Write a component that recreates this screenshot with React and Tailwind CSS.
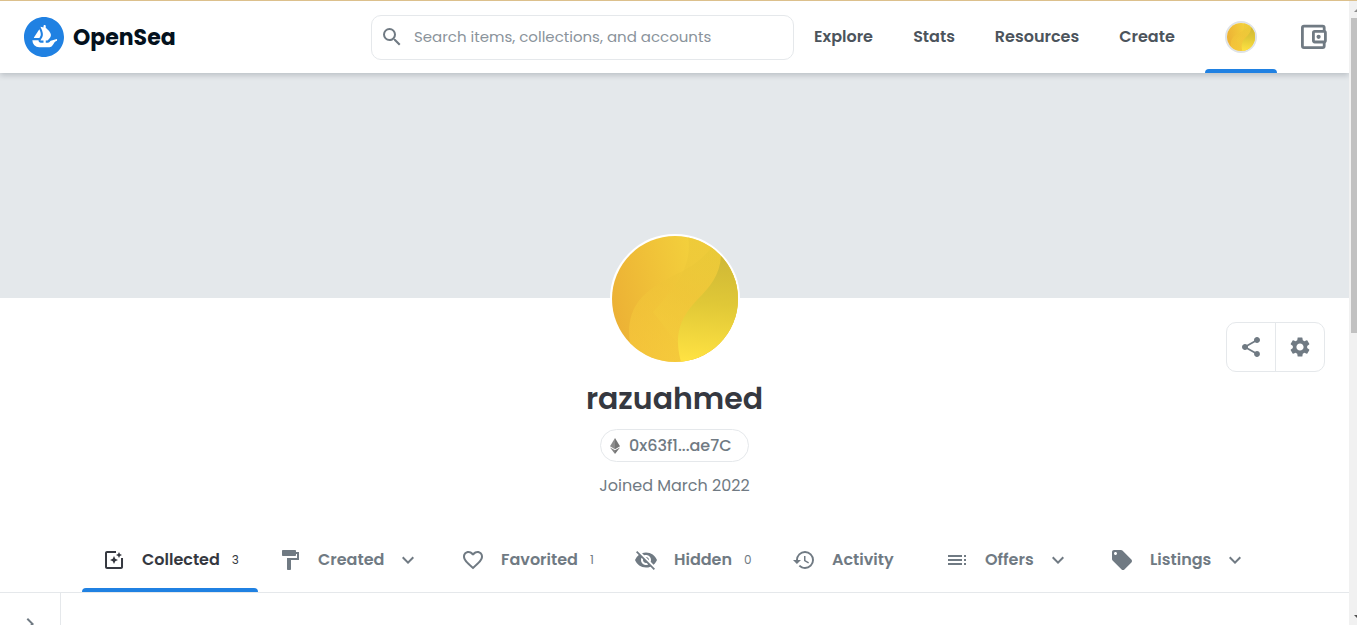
import {
  MdSearch,
  MdShare,
  MdSettings,
  MdPhotoFilter,
  MdFormatPaint,
  MdFavoriteBorder,
  MdVisibilityOff,
  MdHistory,
  MdToc,
  MdLocalOffer,
  MdExpandMore,
  MdChevronRight,
} from "react-icons/md";
import { SiOpensea } from "react-icons/si";

const navLinks = [
  { label: "Explore", width: "w-[99px]" },
  { label: "Stats", width: "w-[82px]" },
  { label: "Resources", width: "w-[124px]" },
  { label: "Create", width: "w-[96px]" },
];

const tabs = [
  { label: "Collected", icon: MdPhotoFilter, count: 3, width: "w-[176px]", active: true },
  { label: "Created", icon: MdFormatPaint, menu: true, width: "w-[183px]" },
  { label: "Favorited", icon: MdFavoriteBorder, count: 1, width: "w-[173px]" },
  { label: "Hidden", icon: MdVisibilityOff, count: 0, width: "w-[158px]" },
  { label: "Activity", icon: MdHistory, width: "w-[153px]" },
  { label: "Offers", icon: MdToc, menu: true, width: "w-[165px]" },
  { label: "Listings", icon: MdLocalOffer, menu: true, width: "w-[177px]" },
];

function AvatarArt({ id }) {
  return (
    <svg viewBox="0 0 126 126" className="block h-full w-full rounded-full" aria-hidden="true">
      <defs>
        <linearGradient id={`${id}-base`} x1="0" y1="0.55" x2="0.7" y2="0.4">
          <stop offset="0" stopColor="#ecb135" />
          <stop offset="0.5" stopColor="#f0c138" />
          <stop offset="1" stopColor="#f3d03c" />
        </linearGradient>
        <linearGradient id={`${id}-mid`} x1="0.1" y1="1" x2="0.8" y2="0">
          <stop offset="0" stopColor="#f2c73a" />
          <stop offset="1" stopColor="#ecca39" />
        </linearGradient>
        <linearGradient id={`${id}-low`} x1="0.8" y1="0" x2="0.4" y2="1">
          <stop offset="0" stopColor="#e3c936" />
          <stop offset="0.5" stopColor="#efc438" />
          <stop offset="1" stopColor="#fad03e" />
        </linearGradient>
        <linearGradient id={`${id}-leaf`} x1="0.55" y1="0" x2="0.5" y2="1">
          <stop offset="0" stopColor="#cfb836" />
          <stop offset="0.45" stopColor="#e0c837" />
          <stop offset="1" stopColor="#ffe242" />
        </linearGradient>
      </defs>
      <rect width="126" height="126" fill={`url(#${id}-base)`} />
      <path d="M76 0C81 29 65 50 41 76L80 126H126V0Z" fill={`url(#${id}-mid)`} opacity="0.8" />
      <path
        d="M99 12C84 31 69 35 55 43C30 57 13 72 18 108L40 126H100L126 50V0Z"
        fill={`url(#${id}-low)`}
        opacity="0.5"
      />
      <path d="M109 20C108 39 98 51 85 64C65 85 63 102 69 126H126V20Z" fill={`url(#${id}-leaf)`} />
    </svg>
  );
}

function EthIcon() {
  return (
    <svg viewBox="0 0 12 18" className="h-[18px] w-3 shrink-0" aria-hidden="true">
      <path d="M6 1L1 9.3L6 12.2Z" fill="#8c8c8c" />
      <path d="M6 1L11 9.3L6 12.2Z" fill="#757575" />
      <path d="M1 10.4L6 17V13.3Z" fill="#858585" />
      <path d="M11 10.4L6 17V13.3Z" fill="#757575" />
    </svg>
  );
}

function WalletIcon() {
  return (
    <svg viewBox="0 0 32 32" className="h-8 w-8" fill="none" stroke="currentColor" strokeWidth="2.8" aria-hidden="true">
      <rect x="5.4" y="5.1" width="21.8" height="21.6" rx="1.6" />
      <rect x="16.4" y="10.4" width="12" height="10.6" rx="1.4" fill="white" />
      <circle cx="21.6" cy="15.8" r="2.1" fill="currentColor" stroke="none" />
    </svg>
  );
}

function Header() {
  return (
    <header className="z-10 flex h-[72px] shrink-0 items-stretch bg-white pr-4 shadow-[0_2px_6px_rgba(4,17,29,0.2)]">
      <a href="#home" className="flex w-[371px] shrink-0 items-center gap-[9px] pl-6 text-[#04111d]">
        <SiOpensea className="h-10 w-10 text-[#2081e2]" aria-hidden="true" />
        <span className="pt-[2px] text-[22px] leading-8 font-bold">OpenSea</span>
      </a>
      <div className="flex min-w-0 flex-1 items-center">
        <div className="flex h-[45px] w-full items-center gap-[10px] rounded-[10px] border border-[#e5e8eb] px-2">
          <MdSearch className="h-6 w-6 shrink-0 text-[#707a83]" aria-hidden="true" />
          <input
            type="search"
            aria-label="Search items, collections, and accounts"
            placeholder="Search items, collections, and accounts"
            className="min-w-0 flex-1 bg-transparent text-[15px] leading-6 text-[#353840] outline-none placeholder:text-[#8a939b]"
          />
        </div>
      </div>
      <nav className="flex shrink-0 items-center" aria-label="Main">
        {navLinks.map((link) => (
          <a
            key={link.label}
            href={`#${link.label.toLowerCase()}`}
            className={`${link.width} flex h-full items-center justify-center text-base font-semibold text-[#4c545c]`}
          >
            {link.label}
          </a>
        ))}
      </nav>
      <button
        type="button"
        aria-label="Account"
        className="ml-[10px] flex w-[72px] shrink-0 flex-col items-center justify-between"
      >
        <span className="mt-5 block h-8 w-8 rounded-full border-2 border-[#dfe3e6]">
          <AvatarArt id="small" />
        </span>
        <span className="h-1 w-full rounded-t-[4px] bg-[#2081e2]" />
      </button>
      <button type="button" aria-label="Wallet" className="ml-4 flex w-10 shrink-0 items-center justify-center text-[#707a83]">
        <WalletIcon />
      </button>
    </header>
  );
}

function Tab({ tab }) {
  const Icon = tab.icon;
  return (
    <button
      type="button"
      role="tab"
      aria-selected={Boolean(tab.active)}
      className={`${tab.width} flex h-full flex-col ${tab.active ? "text-[#353840]" : "text-[#707a83]"}`}
    >
      <span className="flex w-full flex-1 items-center pt-2 pl-5">
        <Icon className="h-6 w-6 shrink-0" aria-hidden="true" />
        <span className="ml-4 text-base leading-6 font-semibold">{tab.label}</span>
        {tab.count !== undefined && <span className="ml-3 text-xs leading-6">{tab.count}</span>}
        {tab.menu && <MdExpandMore className="ml-3 h-6 w-6 shrink-0" aria-hidden="true" />}
      </span>
      <span className={`h-1 w-full rounded-t-[4px] ${tab.active ? "bg-[#2081e2]" : "bg-transparent"}`} />
    </button>
  );
}

function Profile() {
  return (
    <section className="flex shrink-0 flex-col">
      <div className="h-[225px] bg-[#e4e8eb]" />
      <div className="grid grid-cols-[1fr_auto_1fr] items-start px-6">
        <div />
        <div className="-mt-16 flex flex-col items-center">
          <div className="h-[130px] w-[130px] rounded-full border-2 border-white bg-white">
            <AvatarArt id="large" />
          </div>
          <h1 className="mt-[15px] text-[30px] leading-10 font-semibold text-[#353840]">razuahmed</h1>
          <button
            type="button"
            className="mt-[10px] flex h-[33px] w-[149px] items-center gap-2 rounded-full border border-[#e5e8eb] pl-2 text-base font-medium text-[#707a83]"
          >
            <EthIcon />
            0x63f1...ae7C
          </button>
          <p className="mt-3 text-base leading-6 text-[#707a83]">Joined March 2022</p>
        </div>
        <div className="mt-6 flex h-[50px] divide-x divide-[#e5e8eb] justify-self-end rounded-[10px] border border-[#e5e8eb] text-[#707a83]">
          <button type="button" aria-label="Share" className="flex w-[49px] items-center justify-center">
            <MdShare className="h-6 w-6" />
          </button>
          <button type="button" aria-label="Settings" className="flex w-12 items-center justify-center">
            <MdSettings className="h-6 w-6" />
          </button>
        </div>
      </div>
      <div
        role="tablist"
        aria-label="Profile sections"
        className="mt-[25px] flex h-[70px] justify-center border-b border-[#e5e8eb]"
      >
        {tabs.map((tab) => (
          <Tab key={tab.label} tab={tab} />
        ))}
      </div>
    </section>
  );
}

function Scrollbar() {
  return (
    <div className="flex w-2 shrink-0 flex-col overflow-hidden bg-[#f1f1f1] pl-[2px]" aria-hidden="true">
      <svg viewBox="0 0 6 17" className="h-[17px] w-[6px] shrink-0">
        <path d="M3 11L7 7V11Z" fill="#8b8b8b" />
      </svg>
      <div className="h-[315px] shrink-0 bg-[#c1c1c1]" />
      <svg viewBox="0 0 6 17" className="mt-auto h-[17px] w-[6px] shrink-0">
        <path d="M3 7H7V11Z" fill="#505050" />
      </svg>
    </div>
  );
}

export default function App() {
  return (
    <div className="flex h-screen flex-col overflow-hidden border-t border-[#dcc08c] bg-white font-['Poppins','Inter','Open_Sans',sans-serif]">
      <div className="flex min-h-0 flex-1">
        <div className="flex min-w-0 flex-1 flex-col overflow-hidden">
          <Header />
          <main className="flex min-h-0 flex-1 flex-col">
            <Profile />
            <section className="flex min-h-0 flex-1 overflow-hidden">
              <aside className="w-[61px] shrink-0 border-r border-[#e5e8eb]">
                <button type="button" aria-label="Show filters" className="flex w-full justify-center pt-[19px] text-[#707a83]">
                  <MdChevronRight className="h-6 w-6" />
                </button>
              </aside>
            </section>
          </main>
        </div>
        <Scrollbar />
      </div>
    </div>
  );
}
